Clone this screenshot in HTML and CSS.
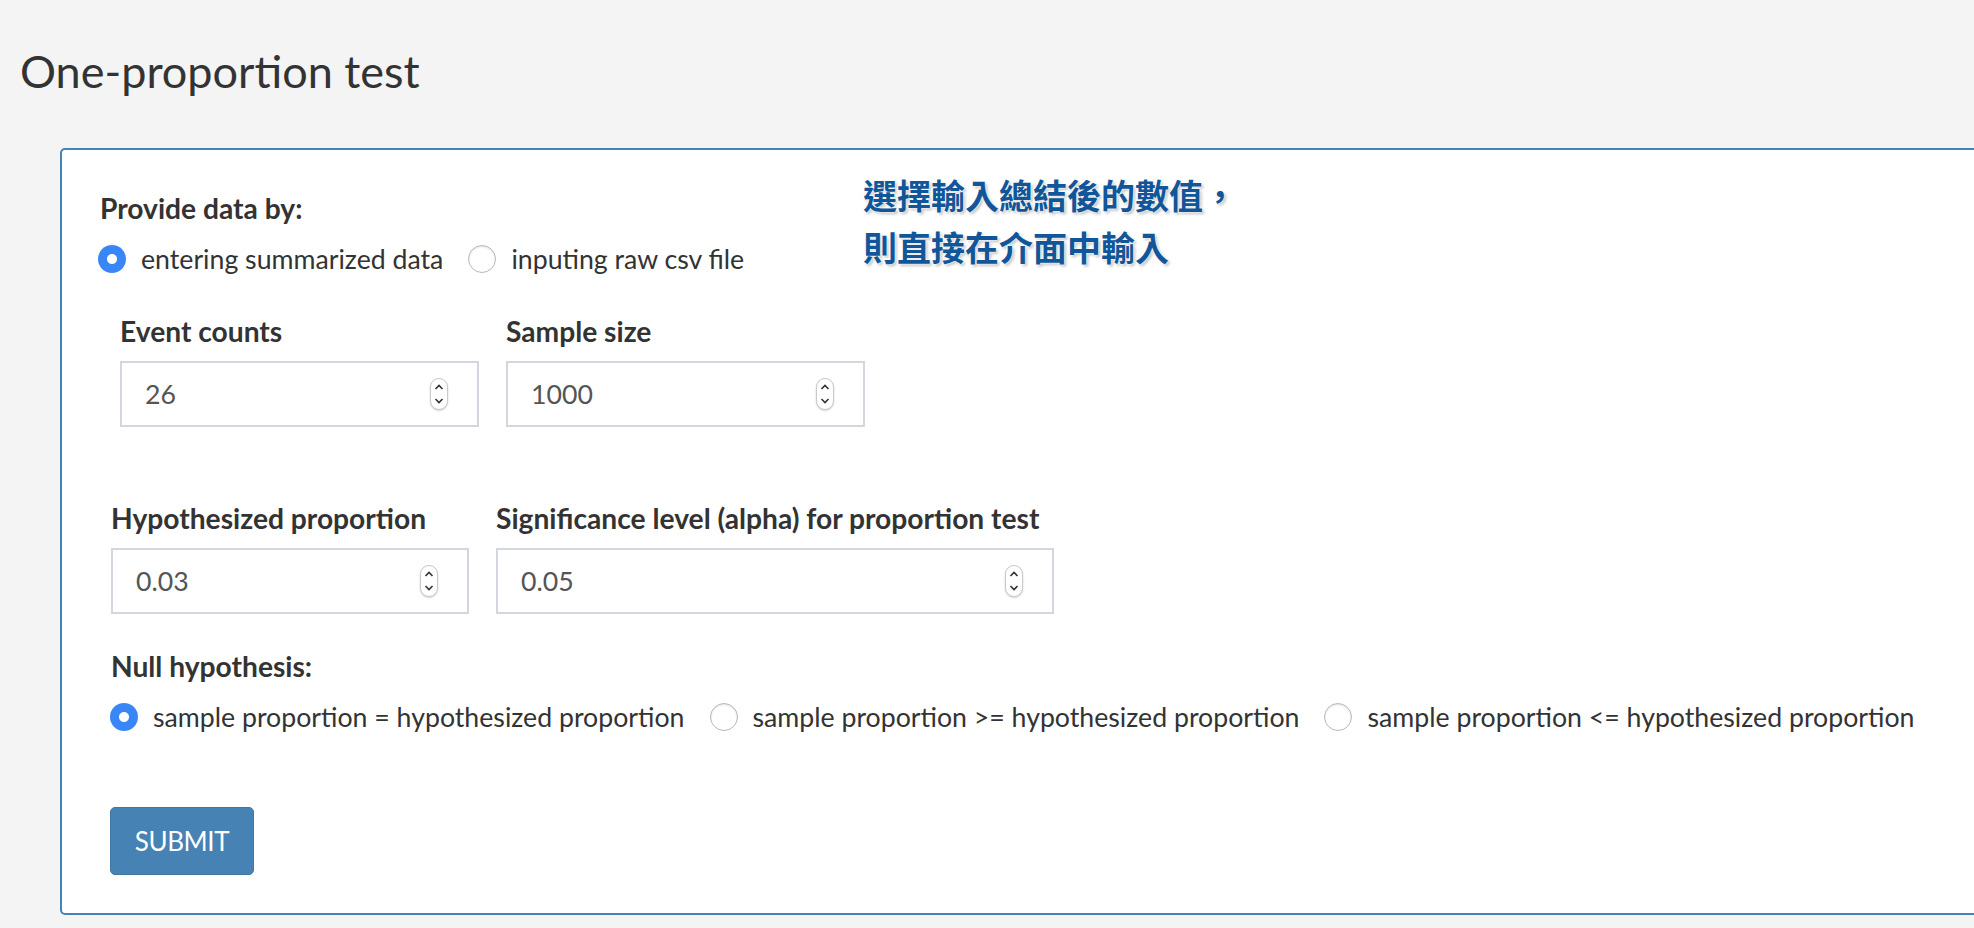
FILE: index.html
```html
<!DOCTYPE html>
<html lang="en">
<head>
<meta charset="utf-8">
<title>One-proportion test</title>
<link rel="stylesheet" href="styles.css">
</head>
<body>
<div class="page">
  <h1 class="title">One-proportion test</h1>
  <div class="panel">
    <div class="note">選擇輸入總結後的數值，<br>則直接在介面中輸入</div>
    <div class="group-label">Provide data by:</div>
    <div class="radio-row">
      <label class="radio"><span class="dot checked"></span><span class="rtext">entering summarized data</span></label>
      <label class="radio"><span class="dot"></span><span class="rtext">inputing raw csv file</span></label>
    </div>

    <div class="fields fields-a">
      <div class="field w359">
        <div class="flabel">Event counts</div>
        <div class="numbox"><span class="val">26</span><span class="spin"><svg width="18" height="32" viewBox="0 0 18 32"><path d="M5.5 11 L9 7.5 L12.5 11" fill="none" stroke="#333" stroke-width="1.6"/><path d="M5.5 21 L9 24.5 L12.5 21" fill="none" stroke="#333" stroke-width="1.6"/></svg></span></div>
      </div>
      <div class="field w359">
        <div class="flabel">Sample size</div>
        <div class="numbox"><span class="val">1000</span><span class="spin"><svg width="18" height="32" viewBox="0 0 18 32"><path d="M5.5 11 L9 7.5 L12.5 11" fill="none" stroke="#333" stroke-width="1.6"/><path d="M5.5 21 L9 24.5 L12.5 21" fill="none" stroke="#333" stroke-width="1.6"/></svg></span></div>
      </div>
    </div>

    <div class="fields fields-b">
      <div class="field w358">
        <div class="flabel">Hypothesized proportion</div>
        <div class="numbox"><span class="val">0.03</span><span class="spin"><svg width="18" height="32" viewBox="0 0 18 32"><path d="M5.5 11 L9 7.5 L12.5 11" fill="none" stroke="#333" stroke-width="1.6"/><path d="M5.5 21 L9 24.5 L12.5 21" fill="none" stroke="#333" stroke-width="1.6"/></svg></span></div>
      </div>
      <div class="field w558">
        <div class="flabel">Significance level (alpha) for proportion test</div>
        <div class="numbox"><span class="val">0.05</span><span class="spin"><svg width="18" height="32" viewBox="0 0 18 32"><path d="M5.5 11 L9 7.5 L12.5 11" fill="none" stroke="#333" stroke-width="1.6"/><path d="M5.5 21 L9 24.5 L12.5 21" fill="none" stroke="#333" stroke-width="1.6"/></svg></span></div>
      </div>
    </div>

    <div class="block-b">
      <div class="group-label">Null hypothesis:</div>
      <div class="radio-row">
        <label class="radio"><span class="dot checked"></span><span class="rtext">sample proportion = hypothesized proportion</span></label>
        <label class="radio"><span class="dot"></span><span class="rtext">sample proportion &gt;= hypothesized proportion</span></label>
        <label class="radio"><span class="dot"></span><span class="rtext">sample proportion &lt;= hypothesized proportion</span></label>
      </div>
      <button class="submit" type="button">SUBMIT</button>
    </div>
  </div>
</div>
</body>
</html>
```

FILE: styles.css
```css
html, body {
  margin: 0;
  padding: 0;
}
body {
  background: #f4f4f4;
  color: #333;
  font-family: "Lato", "Liberation Sans", sans-serif;
  font-size: 26.7px;
  line-height: 36px;
  overflow: hidden;
  width: 1974px;
  height: 928px;
}
.page {
  padding: 0 0 0 20px;
}
.title {
  margin: 0;
  padding-top: 41px;
  font-size: 45px;
  line-height: 60px;
  font-weight: 400;
  color: #333;
}
.panel {
  position: relative;
  margin: 47px -40px 0 40px;
  background: #fff;
  border: 2px solid #4682b4;
  border-radius: 5px;
  padding: 40px 0 38px 36px;
}
.note {
  position: absolute;
  left: 801px;
  top: 19px;
  font-family: "Noto Sans CJK TC", "Noto Sans CJK SC", sans-serif;
  font-weight: 700;
  font-size: 34px;
  line-height: 52px;
  color: #115698;
  text-shadow: 0 0 2px #fff, 0 0 3px #fff, 2px 2px 3px rgba(0, 0, 0, 0.28);
}
.group-label {
  font-weight: 700;
  font-size: 28.2px;
  margin-left: 2px;
}
.radio-row {
  display: flex;
  margin-top: 15px;
}
.radio {
  display: flex;
  align-items: center;
  margin-right: 25px;
}
.dot {
  box-sizing: border-box;
  width: 28px;
  height: 28px;
  border-radius: 50%;
  border: 1px solid #b8b8b8;
  background: #fff;
  box-shadow: inset 0 1px 2px rgba(0, 0, 0, 0.12);
  margin-right: 15px;
  flex: none;
}
.dot.checked {
  border: none;
  box-shadow: none;
  background: radial-gradient(circle, #fff 0 4.5px, #3b86f6 5.5px);
}
.fields {
  display: flex;
  gap: 27px;
}
.fields-a {
  margin-top: 36px;
  padding-left: 22px;
}
.fields-b {
  margin-top: 73px;
  padding-left: 13px;
}
.field {
  display: flex;
  flex-direction: column;
}
.w359 { width: 359px; }
.w358 { width: 358px; }
.w558 { width: 558px; }
.flabel {
  font-weight: 700;
  font-size: 28.2px;
  margin-bottom: 12px;
  white-space: nowrap;
}
.numbox {
  box-sizing: border-box;
  height: 66px;
  border: 2px solid #d3d6df;
  background: #fff;
  display: flex;
  align-items: center;
  padding: 0 29px 0 23px;
  color: #555;
}
.val {
  flex: 1;
}
.spin {
  box-sizing: border-box;
  width: 18px;
  height: 32px;
  border: 1px solid #c9c9c9;
  border-radius: 9px;
  background: #fff;
  box-shadow: 0 1px 2px rgba(0, 0, 0, 0.18);
  display: flex;
  align-items: center;
  justify-content: center;
  overflow: hidden;
}
.spin svg {
  display: block;
  flex: none;
}
.block-b {
  margin-top: 34px;
  padding-left: 12px;
}
.block-b .group-label {
  margin-left: 1px;
}
.submit {
  display: block;
  margin-top: 72px;
  width: 144px;
  height: 68px;
  background: #4682b4;
  border: 1px solid #3f76a4;
  border-radius: 5px;
  color: #fff;
  font-family: "Lato", "Liberation Sans", sans-serif;
  font-size: 26px;
  letter-spacing: -0.4px;
  padding: 0;
}
```
